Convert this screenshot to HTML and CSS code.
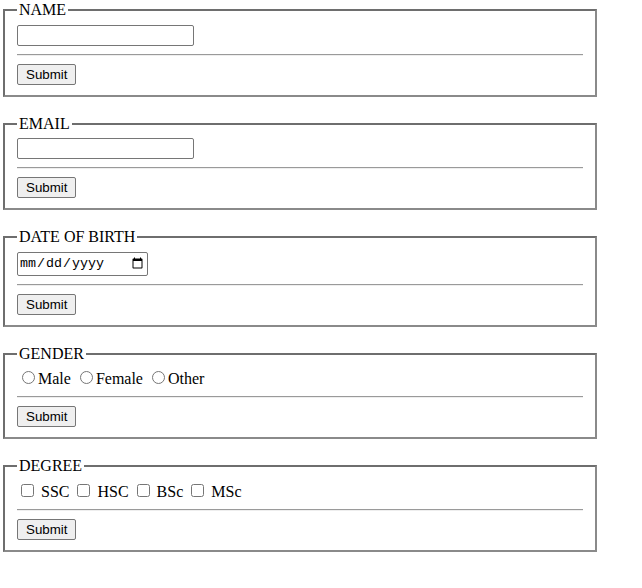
FILE: index.html
```html
<!DOCTYPE html>
<html>
<head>
<meta charset="utf-8">
<title>Form</title>
<link rel="stylesheet" href="styles.css">
</head>
<body class="page">
<form class="block">
  <fieldset class="group">
    <legend class="group-title">NAME</legend>
    <input class="field" type="text">
    <hr class="rule">
    <button class="submit" type="button">Submit</button>
  </fieldset>
</form>
<form class="block">
  <fieldset class="group">
    <legend class="group-title">EMAIL</legend>
    <input class="field" type="email">
    <hr class="rule">
    <button class="submit" type="button">Submit</button>
  </fieldset>
</form>
<form class="block">
  <fieldset class="group">
    <legend class="group-title">DATE OF BIRTH</legend>
    <input class="date" type="date">
    <hr class="rule">
    <button class="submit" type="button">Submit</button>
  </fieldset>
</form>
<form class="block">
  <fieldset class="group">
    <legend class="group-title">GENDER</legend>
    <label class="choice"><input class="radio" type="radio" name="g">Male</label>
    <label class="choice"><input class="radio" type="radio" name="g">Female</label>
    <label class="choice"><input class="radio" type="radio" name="g">Other</label>
    <hr class="rule">
    <button class="submit" type="button">Submit</button>
  </fieldset>
</form>
<form class="block">
  <fieldset class="group">
    <legend class="group-title">DEGREE</legend>
    <label class="choice"><input class="check" type="checkbox"> SSC</label>
    <label class="choice"><input class="check" type="checkbox"> HSC</label>
    <label class="choice"><input class="check" type="checkbox"> BSc</label>
    <label class="choice"><input class="check" type="checkbox"> MSc</label>
    <hr class="rule">
    <button class="submit" type="button">Submit</button>
  </fieldset>
</form>
</body>
</html>
```
FILE: styles.css
```css
.page {
  margin: 0;
  padding-top: 1px;
  font-family: "Liberation Serif", "Times New Roman", serif;
  font-size: 16px;
  color: #000;
  background: #fff;
}

.block {
  margin: 0 0 18px 0;
}

.group {
  width: 566px;
  margin: 0 3px;
  padding: 0.35em 0.75em 0.625em;
  border-style: solid;
  border-width: 2px;
  border-top-color: #6e6e6e;
  border-left-color: #6e6e6e;
  border-right-color: #8a8a8a;
  border-bottom-color: #8a8a8a;
}

.group-title {
  padding: 0 2px;
}

.field {
  width: 171px;
  height: 17px;
  padding: 1px 2px;
  border: 1px solid #767676;
  border-radius: 2px;
  font: 13.333px "Liberation Sans", Arial, sans-serif;
}

.date {
  font: 13.333px "Liberation Mono", monospace;
  border: 1px solid #767676;
  border-radius: 2px;
  width: 127px;
  height: 22px;
  padding: 0 1px;
}

.rule {
  margin: 8px 0;
  border: 0;
  border-top: 1px solid #9a9a9a;
  border-bottom: 1px solid #eee;
}

.submit {
  font: 13.333px "Liberation Sans", Arial, sans-serif;
  padding: 1px 8px;
  height: 21px;
  border: 1px solid #767676;
  border-radius: 2px;
  background: #efefef;
  color: #000;
}

.choice {
  font-size: 16px;
}

.radio {
  margin: 3px 3px 0 5px;
}

.check {
  margin: 3px 3px 3px 4px;
}
```
